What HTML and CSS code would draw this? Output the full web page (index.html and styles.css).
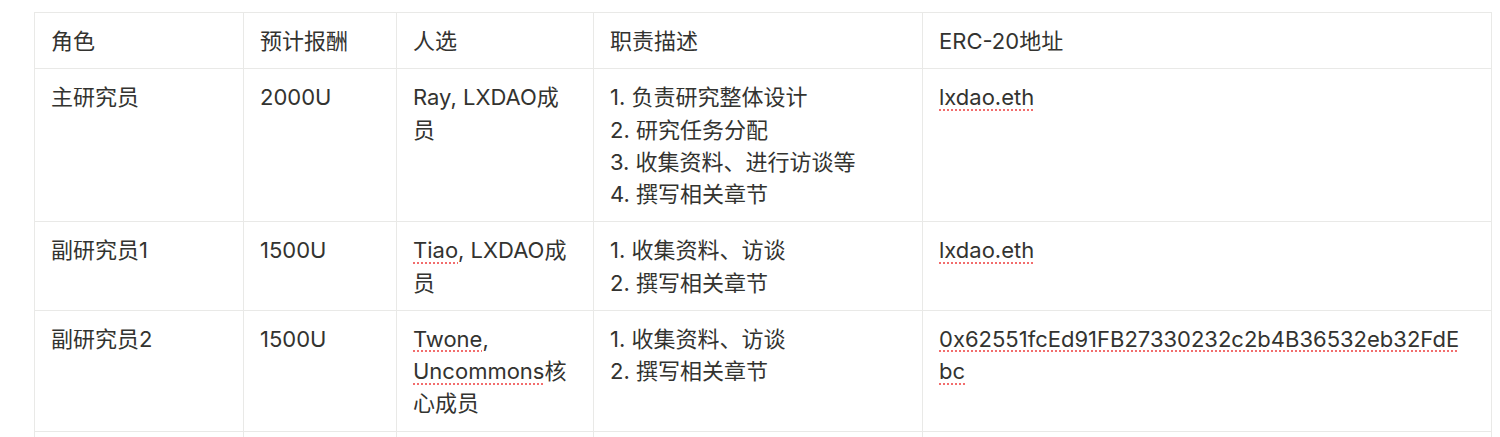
FILE: index.html
```html
<!DOCTYPE html>
<html lang="zh-CN">
<head>
<meta charset="utf-8">
<title>研究分工</title>
<link rel="stylesheet" href="styles.css">
</head>
<body>
<div class="page">
  <table class="roles">
    <colgroup>
      <col class="c1"><col class="c2"><col class="c3"><col class="c4"><col class="c5">
    </colgroup>
    <thead>
      <tr>
        <th>角色</th>
        <th>预计报酬</th>
        <th>人选</th>
        <th>职责描述</th>
        <th>ERC-20地址</th>
      </tr>
    </thead>
    <tbody>
      <tr>
        <td>主研究员</td>
        <td>2000U</td>
        <td>Ray, LXDAO成<br>员</td>
        <td><div>1. 负责研究整体设计</div><div>2. 研究任务分配</div><div>3. 收集资料、进行访谈等</div><div>4. 撰写相关章节</div></td>
        <td><span class="sp">lxdao.eth</span></td>
      </tr>
      <tr>
        <td>副研究员1</td>
        <td>1500U</td>
        <td><span class="sp">Tiao</span>, LXDAO成<br>员</td>
        <td><div>1. 收集资料、访谈</div><div>2. 撰写相关章节</div></td>
        <td><span class="sp">lxdao.eth</span></td>
      </tr>
      <tr>
        <td>副研究员2</td>
        <td>1500U</td>
        <td><span class="sp">Twone</span>,<br><span class="sp">Uncommons</span>核<br>心成员</td>
        <td><div>1. 收集资料、访谈</div><div>2. 撰写相关章节</div></td>
        <td class="addr"><span class="sp">0x62551fcEd91FB27330232c2b4B36532eb32FdE</span><br><span class="sp">bc</span></td>
      </tr>
      <tr class="cut">
        <td></td><td></td><td></td><td></td><td></td>
      </tr>
    </tbody>
  </table>
</div>
</body>
</html>
```

FILE: styles.css
```css
html, body {
  margin: 0;
  padding: 0;
  background: #ffffff;
}
body {
  font-family: Inter, "Noto Sans CJK SC", sans-serif;
  color: #333330;
  font-size: 22px;
  line-height: 32.25px;
}
.page {
  padding: 12px 0 0 34px;
}
.roles {
  border-collapse: collapse;
  table-layout: fixed;
  width: 1457px;
}
.c1 { width: 209px; }
.c2 { width: 153px; }
.c3 { width: 197px; }
.c4 { width: 329px; }
.c5 { width: 569px; }
.roles th,
.roles td {
  border: 1px solid #e9e9e7;
  padding: 12px 16px 11px;
  text-align: left;
  vertical-align: top;
  font-weight: 400;
  white-space: nowrap;
}
.sp {
  text-decoration-line: underline;
  text-decoration-style: dotted;
  text-decoration-color: #f26d6d;
  text-decoration-thickness: 2px;
  text-underline-offset: 4px;
}
.cut td {
  height: 8px;
  padding: 0;
}
```
